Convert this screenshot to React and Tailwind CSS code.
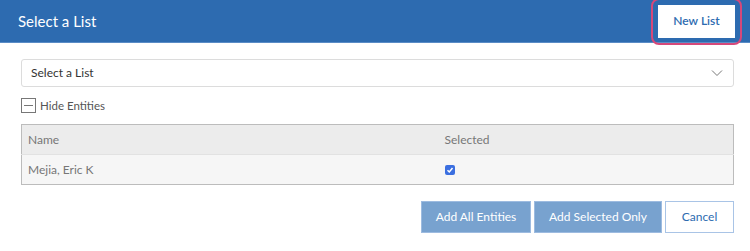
import React from "react";

const App = () => {
  return (
    <div className="w-[750px] h-[251px] bg-white font-['Lato',sans-serif] text-[#555]">
      <header className="h-[43px] bg-[#2d6bb0] border-b border-[#5a8cc6] flex items-center justify-between pl-[18px] pr-[11px]">
        <h1 className="text-white text-[15px] leading-none">Select a List</h1>
        <div className="rounded-[8px] border-2 border-[#d6487a] p-[5px] -mr-[3px]">
          <button className="bg-white text-[#2d6bb0] text-[12px] font-semibold w-[77px] h-[33px]">
            New List
          </button>
        </div>
      </header>

      <div className="px-[21px] pr-[16px]">
        <div className="mt-[16px] h-[28px] border border-[#dcdcdc] rounded-[3px] flex items-center justify-between pl-[9px] pr-[10px]">
          <span className="text-[12px] text-[#333]">Select a List</span>
          <svg width="12" height="8" viewBox="0 0 12 8" fill="none" stroke="#777" strokeWidth="1">
            <path d="M1 1.5l5 5 5-5" />
          </svg>
        </div>

        <div className="mt-[10px] flex items-center gap-[4px]">
          <span className="w-[15px] h-[15px] border border-[#777] flex items-center justify-center">
            <span className="w-[9px] h-px bg-[#777]" />
          </span>
          <span className="text-[11.5px] text-[#555]">Hide Entities</span>
        </div>

        <table className="mt-[10px] w-full border border-[#bcbcbc] border-collapse text-[12px] text-[#777]">
          <thead>
            <tr className="h-[30px] bg-[#ececec] border-b border-[#e2e2e2]">
              <th className="text-left font-normal pl-[6px] w-[423px]">Name</th>
              <th className="text-left font-normal">Selected</th>
            </tr>
          </thead>
          <tbody>
            <tr className="h-[30px] bg-[#f6f6f6]">
              <td className="pl-[6px]">Mejia, Eric K</td>
              <td>
                <span className="w-[10px] h-[10px] rounded-[2px] bg-[#3b6fe0] flex items-center justify-center">
                  <svg width="8" height="8" viewBox="0 0 8 8" fill="none" stroke="white" strokeWidth="1.5">
                    <path d="M1.5 4.2l1.8 1.8 3.2-4" />
                  </svg>
                </span>
              </td>
            </tr>
          </tbody>
        </table>

        <div className="mt-[16px] flex justify-end gap-[3px]">
          <button className="w-[110px] h-[32px] bg-[#78a2cf] border border-[#9dbbe0] text-white text-[12px]">
            Add All Entities
          </button>
          <button className="w-[128px] h-[32px] bg-[#78a2cf] border border-[#9dbbe0] text-white text-[12px]">
            Add Selected Only
          </button>
          <button className="w-[69px] h-[32px] bg-white border border-[#a9c4e6] text-[#2d6bb0] text-[12px]">
            Cancel
          </button>
        </div>
      </div>
    </div>
  );
};

export default App;
